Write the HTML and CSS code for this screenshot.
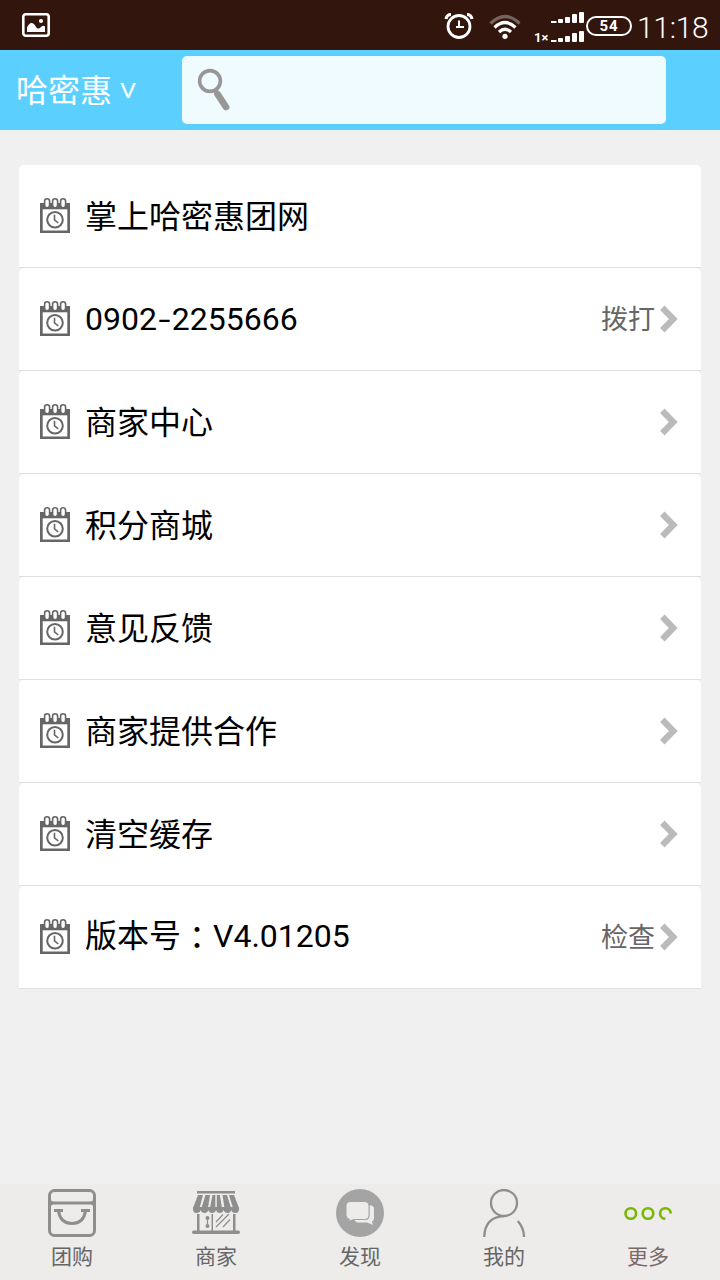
FILE: index.html
```html
<!DOCTYPE html>
<html lang="zh-CN">
<head>
    <meta charset="UTF-8">
    <meta name="viewport" content="width=device-width, initial-scale=1.0">
    <title>哈密惠</title>
    <link rel="stylesheet" href="styles.css">
</head>
<body>
    <!-- Shared icons -->
    <svg class="sprite" width="0" height="0">
        <symbol id="calendar" viewBox="0 0 30 35">
            <path d="M0 5h30v30H0z" fill="#666"/>
            <path d="M2.7 11.3h24.6v21.2H2.7z" fill="#fff"/>
            <g fill="#fff" stroke="#666" stroke-width="1.6">
                <rect x="4.6" y=".8" width="5" height="9" rx="2.5"/>
                <rect x="12.6" y=".8" width="5" height="9" rx="2.5"/>
                <rect x="20.6" y=".8" width="5" height="9" rx="2.5"/>
            </g>
            <g fill="none" stroke="#666" stroke-width="2">
                <circle cx="15" cy="21.8" r="7.8"/>
                <path d="M14.5 16.8v5l3.8 3.2" stroke-width="1.6"/>
            </g>
        </symbol>
        <symbol id="arrow" viewBox="0 0 18 28">
            <path d="M2.3 2.7 13.3 14 2.3 25.3" fill="none" stroke="#bbb" stroke-width="6.3"/>
        </symbol>
    </svg>

    <div class="status-bar">
        <svg class="picture-icon" width="28" height="24" viewBox="0 0 28 24">
            <rect x="1.3" y="1.3" width="25.4" height="21.4" rx="2.5" fill="none" stroke="#fff" stroke-width="2.6"/>
            <path d="M5 19v-4.500Q7 10 9.500 10T14 14q2 3 5 0 2.500-2 4-.5V19z" fill="#fff"/>
            <circle cx="19" cy="8" r="2.1" fill="#fff"/>
        </svg>
        <div class="status-right">
            <svg width="30" height="28" viewBox="0 0 30 28">
                <g fill="none" stroke="#fff">
                    <circle cx="15" cy="14.5" r="11" stroke-width="2.8"/>
                    <path d="M15 8.500v6.500M12 15h8" stroke-width="2"/>
                    <path d="M2 7q1-4.500 5-4.500M28 7q-1-4.500-5-4.500" stroke-width="3.2"/>
                </g>
            </svg>
            <svg class="wifi" width="32" height="26" viewBox="0 0 32 26">
                <g fill="none" stroke="#fff" stroke-width="3.2">
                    <path d="M1.500 9.500q14.500-14 29 0" stroke="#77625c"/>
                    <path d="M5.500 13.500q10.500-10 21 0"/>
                    <path d="M10 18q6-5.500 12 0"/>
                </g>
                <circle cx="16" cy="22.3" r="2.6" fill="#fff"/>
            </svg>
            <div class="signal">
                <span class="signal-type">1×</span>
                <svg width="34" height="30" viewBox="0 0 34 30">
                    <g fill="#fff">
                        <path d="M0 9h5.500v2H0zM0 28h5.500v2H0z"/>
                        <rect x="7" y="7" width="5" height="4" rx="1"/>
                        <rect x="14" y="5" width="5" height="6" rx="1"/>
                        <rect x="21" y="2" width="5" height="9" rx="1"/>
                        <rect x="28" y="0" width="5" height="11" rx="1"/>
                        <rect x="7" y="26" width="5" height="4" rx="1"/>
                        <rect x="14" y="24" width="5" height="6" rx="1"/>
                        <rect x="21" y="21" width="5" height="9" rx="1"/>
                        <rect x="28" y="19" width="5" height="11" rx="1"/>
                    </g>
                </svg>
            </div>
            <span class="battery">54</span>
            <span class="clock">11:18</span>
        </div>
    </div>

    <div class="header">
        <div class="city">哈密惠<span class="city-arrow">V</span></div>
        <div class="search">
            <svg width="34" height="44" viewBox="0 0 34 44">
                <g fill="none" stroke="#979797">
                    <circle cx="13" cy="13" r="10.4" stroke-width="3.6"/>
                    <path d="M20.500 26 29 39" stroke-width="6.8" stroke-linecap="round"/>
                    <path d="M17.500 21l3 5" stroke-width="3.5"/>
                </g>
            </svg>
        </div>
    </div>

    <div class="menu">
        <div class="row">
            <svg class="calendar"><use href="#calendar"/></svg>
            <span class="label">掌上哈密惠团网</span>
        </div>
        <div class="row">
            <svg class="calendar"><use href="#calendar"/></svg>
            <span class="label number">0902<span class="dash">-</span>2255666</span>
            <span class="action">拨打</span>
            <svg class="arrow"><use href="#arrow"/></svg>
        </div>
        <div class="row">
            <svg class="calendar"><use href="#calendar"/></svg>
            <span class="label">商家中心</span>
            <svg class="arrow"><use href="#arrow"/></svg>
        </div>
        <div class="row">
            <svg class="calendar"><use href="#calendar"/></svg>
            <span class="label">积分商城</span>
            <svg class="arrow"><use href="#arrow"/></svg>
        </div>
        <div class="row">
            <svg class="calendar"><use href="#calendar"/></svg>
            <span class="label">意见反馈</span>
            <svg class="arrow"><use href="#arrow"/></svg>
        </div>
        <div class="row">
            <svg class="calendar"><use href="#calendar"/></svg>
            <span class="label">商家提供合作</span>
            <svg class="arrow"><use href="#arrow"/></svg>
        </div>
        <div class="row">
            <svg class="calendar"><use href="#calendar"/></svg>
            <span class="label">清空缓存</span>
            <svg class="arrow"><use href="#arrow"/></svg>
        </div>
        <div class="row">
            <svg class="calendar"><use href="#calendar"/></svg>
            <span class="label version">版本号<span class="colon" lang="zh-TW">：</span>V4.01205</span>
            <span class="action">检查</span>
            <svg class="arrow"><use href="#arrow"/></svg>
        </div>
    </div>

    <div class="tab-bar">
        <div class="tab">
            <svg width="48" height="48" viewBox="0 0 48 48">
                <g fill="none" stroke="#8e8e8e" stroke-width="3">
                    <rect x="1.5" y="1.5" width="45" height="45" rx="5"/>
                    <path d="M1.500 10q0 4 4 4h37q4 0 4-4M1.500 18q0-4 4-4M46.500 18q0-4-4-4"/>
                    <path d="M6 21.500h9M33 21.500h9M10.500 22q2 12.500 13.500 12.500T37.500 22"/>
                </g>
            </svg>
            <span>团购</span>
        </div>
        <div class="tab">
            <svg width="48" height="48" viewBox="0 0 48 48">
                <g fill="#8e8e8e">
                    <path d="M5 2h38v2.500H5z"/>
                    <path d="M6 6h5L7.500 19H1zM13.500 6H18l-2 13H9.500zM20.500 6h2.800v13H18zM24.800 6h3l2.200 13h-5.200zM30.500 6H35l4 13h-6.500zM37 6h5l5 13h-6z"/>
                    <path d="M1 18h46v2q0 4-3.500 4t-4.200-3q-.8 3-3.800 3t-3.900-3q-.8 3-3.800 3T24 21q-.8 3-3.800 3t-3.900-3q-.8 3-3.800 3t-3.800-3Q8 24 4.500 24T1 20z"/>
                    <path d="M5 25h2.500v17H5zM19.500 25H21v17h-1.500zM41 25h2.500v17H41z"/>
                    <rect x="0" y="41.5" width="48" height="3.5" rx="1.7"/>
                    <circle cx="15.5" cy="29" r="2"/>
                    <circle cx="15.5" cy="37" r="2"/>
                </g>
                <path d="M15.500 28v10M24 33l7-7.500M24 38l13-13M31 38l7-7.500" fill="none" stroke="#8e8e8e" stroke-width="1.2"/>
            </svg>
            <span>商家</span>
        </div>
        <div class="tab">
            <svg width="48" height="48" viewBox="0 0 48 48">
                <circle cx="24" cy="24" r="24" fill="#a4a4a4"/>
                <path d="M32 16.500h2.500q3.500 0 3.500 3.500v9q0 3-2 3.500l1 3.500-6-2.500H21l-3-2.500h11q4.500 0 4.500-4.500v-10z" fill="#edecea"/>
                <path d="M14 12.500h15q4 0 4 4v10q0 4-4 4H18l-6.500 2 2-2.500q-3.500 0-3.500-4v-9.500q0-4 4-4z" fill="#edecea" stroke="#a4a4a4"/>
            </svg>
            <span>发现</span>
        </div>
        <div class="tab">
            <svg width="48" height="48" viewBox="0 0 48 48">
                <g fill="none" stroke="#8e8e8e" stroke-width="2.3">
                    <circle cx="24" cy="14" r="13"/>
                    <path d="M24 27.200Q5 28 4.200 48M37.800 32q6.200 7 6.200 16"/>
                </g>
            </svg>
            <span>我的</span>
        </div>
        <div class="tab active">
            <svg width="48" height="48" viewBox="0 0 48 48">
                <g fill="none" stroke="#76b900" stroke-width="2.6">
                    <circle cx="6.8" cy="24.5" r="5.3"/>
                    <circle cx="24" cy="24.5" r="5.3"/>
                    <path d="M46.700 24.500a5.300 5.300 0 1 0-5.300 5.300"/>
                </g>
            </svg>
            <span>更多</span>
        </div>
    </div>
</body>
</html>
```
FILE: styles.css
```css
* {
    box-sizing: border-box;
}
body {
    display: flex;
    flex-direction: column;
    width: 720px;
    height: 1280px;
    margin: 0;
    overflow: hidden;
    background: #f0f0f0;
    font-family: Roboto, "Noto Sans CJK SC", sans-serif;
}
svg {
    display: block;
    flex: none;
}
.sprite {
    position: absolute;
}
.status-bar {
    display: flex;
    justify-content: space-between;
    height: 50px;
    padding: 0 12px 0 22px;
    background: #32150c;
    color: #fff;
}
.picture-icon {
    margin-top: 13px;
}
.status-right {
    display: flex;
    align-items: center;
    height: 52px;
}
.wifi {
    margin: 2px 0 0 15px;
}
.signal {
    display: flex;
    align-items: flex-end;
    margin: 2px 0 0 13px;
}
.signal-type {
    width: 17px;
    font-size: 13px;
    font-weight: bold;
    line-height: 9px;
}
.battery {
    width: 46px;
    height: 20px;
    margin-left: 1px;
    border: 2px solid #fff;
    border-radius: 10px;
    font-size: 15px;
    font-weight: bold;
    line-height: 16px;
    text-align: center;
    letter-spacing: 1px;
}
.clock {
    width: 71px;
    margin: 3px 0 0 5px;
    font-size: 30px;
    font-weight: 300;
    line-height: 36px;
    white-space: nowrap;
    letter-spacing: -0.3px;
}
.header {
    display: flex;
    align-items: center;
    height: 80px;
    padding-left: 16px;
    background: #5bd0ff;
}
.city {
    width: 166px;
    padding-top: 2px;
    color: #fff;
    font-size: 32px;
    line-height: 40px;
}
.city-arrow {
    display: inline-block;
    margin-left: 8px;
    font-size: 21px;
    line-height: 24px;
    transform: translateY(-4px) scaleX(1.2);
    transform-origin: left;
}
.search {
    display: flex;
    align-items: center;
    width: 484px;
    height: 68px;
    margin-top: -1px;
    padding-left: 15px;
    background: #effbff;
    border-radius: 5px;
}
.menu {
    flex: 1;
    padding: 35px 19px 0;
}
.row {
    display: flex;
    align-items: center;
    height: 103px;
    padding: 0 23px 0 21px;
    background: #fff;
    border-bottom: 1px solid #e0e0e0;
    border-radius: 5px 5px 0 0;
}
.calendar {
    width: 30px;
    height: 35px;
    margin-bottom: 2px;
}
.label {
    flex: 1;
    margin-left: 15px;
    padding-top: 2px;
    color: #000;
    font-size: 32px;
    line-height: 40px;
}
.number {
    padding-top: 0;
}
.version {
    padding: 0 0 3px;
}
.dash {
    display: inline-block;
    margin: 0 3px;
    transform: scaleX(1.35);
}
.colon {
    display: inline-block;
    font-family: "Noto Sans CJK TC", sans-serif;
    line-height: 30px;
    transform: translateY(2px);
}
.action {
    margin-right: 5px;
    padding-top: 1px;
    color: #666;
    font-size: 27px;
    line-height: 40px;
}
.arrow {
    width: 18px;
    height: 28px;
    margin-bottom: 1px;
}
.tab-bar {
    display: flex;
    height: 96px;
    background: #edecea;
}
.tab {
    display: flex;
    flex: 1;
    flex-direction: column;
    align-items: center;
    padding-top: 5px;
    color: #666;
    font-size: 21px;
    line-height: 30px;
}
.tab span {
    margin-top: 5px;
}
.tab.active {
    color: #7a6b6b;
}
```
